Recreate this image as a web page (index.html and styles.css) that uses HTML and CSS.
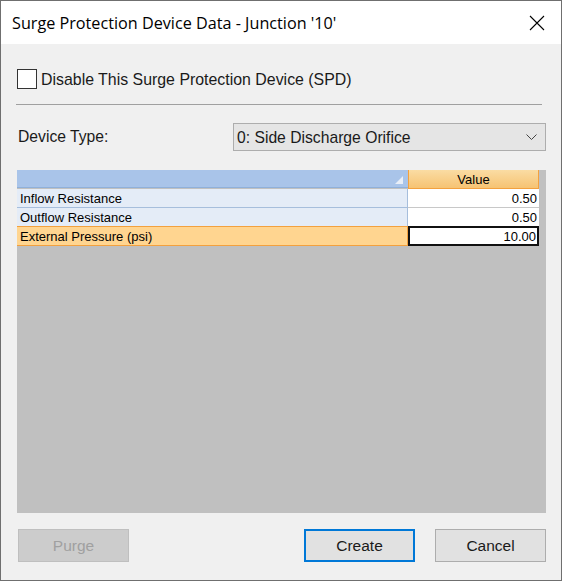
FILE: index.html
```html
<!DOCTYPE html>
<html>
<head>
<meta charset="utf-8">
<link rel="stylesheet" href="styles.css">
</head>
<body>
<div class="window">
  <div class="titlebar">
    <span class="title">Surge Protection Device Data - Junction '10'</span>
    <svg class="close" width="16" height="16" viewBox="0 0 16 16"><path d="M1 1 L15 15 M15 1 L1 15" stroke="#000" stroke-width="1.1" fill="none"/></svg>
  </div>
  <div class="content">
    <label class="check-row"><span class="checkbox"></span><span class="check-label">Disable This Surge Protection Device (SPD)</span></label>
    <div class="separator"></div>
    <div class="device-row">
      <span class="device-label">Device Type:</span>
      <div class="select">
        <span class="select-text">0: Side Discharge Orifice</span>
        <svg class="chevron" width="11" height="7" viewBox="0 0 11 7"><path d="M0.5 0.5 L5.5 5.5 L10.5 0.5" stroke="#444" stroke-width="1" fill="none"/></svg>
      </div>
    </div>
    <div class="grid">
      <div class="grid-table">
        <div class="hcell name-h"><span class="sort-tri"></span></div>
        <div class="hcell value-h">Value</div>
        <div class="cell name">Inflow Resistance</div>
        <div class="cell value">0.50</div>
        <div class="cell name">Outflow Resistance</div>
        <div class="cell value">0.50</div>
        <div class="cell name sel">External Pressure (psi)</div>
        <div class="cell value sel edit">10.00</div>
      </div>
    </div>
    <div class="buttons">
      <button class="btn disabled">Purge</button>
      <div class="spacer"></div>
      <button class="btn default">Create</button>
      <button class="btn">Cancel</button>
    </div>
  </div>
</div>
</body>
</html>
```
FILE: styles.css
```css
html, body { margin: 0; padding: 0; }
body { background: #f0f0f0; }
.window {
  width: 562px; height: 581px; box-sizing: border-box;
  border: 1px solid #6f6f6f;
  display: flex; flex-direction: column;
  background: #f0f0f0;
}
.titlebar {
  height: 43px; background: #fff;
  display: flex; align-items: center; justify-content: space-between;
  padding: 0 16px 0 11px;
}
.title {
  font-family: "Open Sans", "Noto Sans", sans-serif; font-size: 16.2px; color: #000;
}
.close { display: block; }
.content {
  flex: 1; display: flex; flex-direction: column;
  padding: 0 15px 0 15px;
  font-family: "Liberation Sans", Arial, sans-serif;
}
.check-row {
  display: flex; align-items: center; gap: 4px;
  margin-top: 25px; margin-left: 1px; height: 20px;
}
.checkbox {
  width: 18px; height: 18px; border: 1px solid #333; background: #fff; display: block;
}
.check-label { font-size: 15.9px; color: #1a1a1a; padding-top: 2px; }
.separator {
  height: 1px; background: #a0a0a0; margin-top: 15px; margin-right: 4px;
}
.device-row {
  display: flex; align-items: center; margin-top: 18px; height: 28px;
}
.device-label { font-size: 15.7px; width: 215px; padding-left: 2px; padding-bottom: 0; color: #1a1a1a; }
.select {
  flex: 1; height: 26px; border: 1px solid #adadad; background: #e5e5e5;
  display: flex; align-items: center; justify-content: space-between;
  padding: 0 8px 0 3px;
}
.select-text { font-size: 15.7px; color: #1a1a1a; padding-top: 2px; }
.chevron { display: block; }
.grid {
  margin-top: 19px; margin-left: 1px; height: 343px; background: #c0c0c0;
}
.grid-table {
  display: grid; grid-template-columns: 391px 131px;
  font-size: 13px; color: #000;
}
.hcell { height: 18px; box-sizing: border-box; }
.name-h {
  background: #a9c4e9; border-bottom: 1px solid #8fb0da; position: relative;
}
.sort-tri {
  position: absolute; right: 5px; top: 6px; width: 0; height: 0;
  border-left: 8px solid transparent; border-bottom: 8px solid #e8eef7;
}
.value-h {
  background: linear-gradient(#fadca3, #f6c373);
  border-left: 1px solid #f3a13e; border-right: 1px solid #f3a13e; border-bottom: 1px solid #f3a13e;
  text-align: center; line-height: 18px; height: 19px; padding-top: 1px; box-sizing: border-box;
}
.cell { height: 19px; box-sizing: border-box; line-height: 16px; padding-top: 2px; white-space: nowrap; }
.name {
  background: #e4ecf7; border-bottom: 1px solid #a6bedc; border-right: 1px solid #a6bedc;
  padding-left: 3px;
}
.value {
  background: #fff; border-bottom: 1px solid #c8c8c8; text-align: right; padding-right: 2px;
}
.name.sel { background: #ffd590; border-bottom: 1px solid #f3a13e; border-right: 1px solid #f3a13e; border-top: 1px solid #f3a13e; margin-top: -1px; height: 20px; }
.value.edit { border: 2px solid #111; margin-top: -1px; height: 20px; line-height: 16px; padding-top: 1px; padding-right: 1px; }
.buttons {
  display: flex; margin-top: 16px; gap: 20px; margin-left: 2px;
}
.spacer { flex: 1; }
.btn {
  width: 111px; height: 33px; box-sizing: border-box;
  font-family: "Liberation Sans", Arial, sans-serif; font-size: 15.5px;
  background: #e1e1e1; border: 1px solid #adadad; color: #1a1a1a; padding: 0;
}
.btn.disabled { background: #cccccc; border-color: #bfbfbf; color: #a0a0a0; }
.btn.default { border: 2px solid #0078d7; }
```
